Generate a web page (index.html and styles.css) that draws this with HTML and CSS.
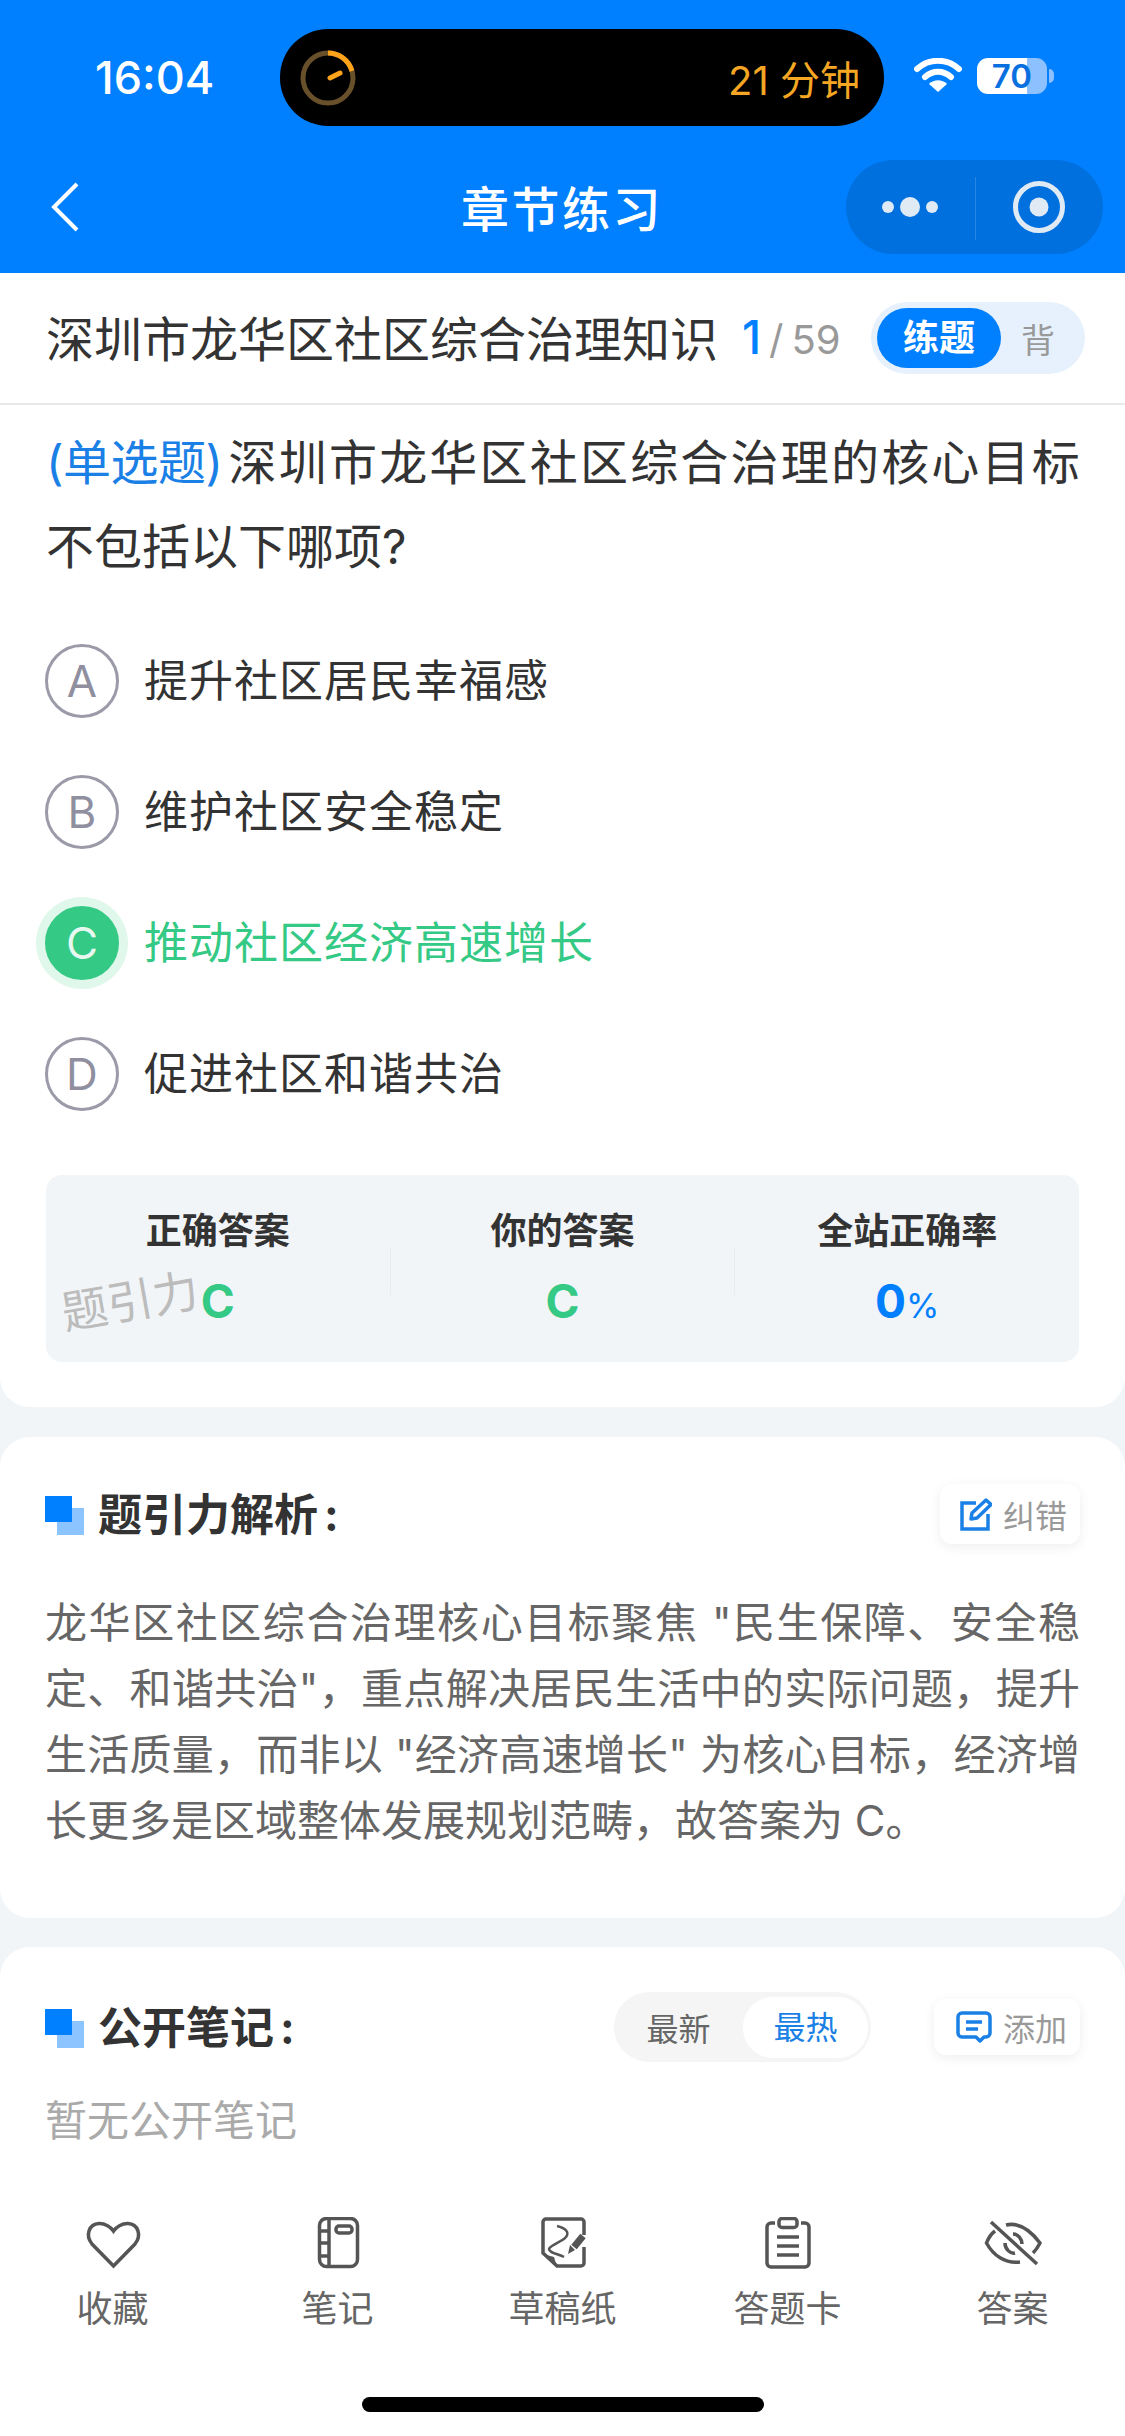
FILE: index.html
```html
<!DOCTYPE html>
<html lang="zh-CN">
<head>
  <meta charset="UTF-8">
  <meta name="viewport" content="width=device-width, initial-scale=1.0">
  <title>章节练习</title>
  <link rel="stylesheet" href="styles.css">
</head>
<body>
  <header class="top">
    <div class="status">
      <span class="time">16:04</span>
      <div class="island">
        <svg class="ring" viewBox="0 0 56 56">
          <circle cx="28" cy="28" r="25" fill="none" stroke="#68502a" stroke-width="5"/>
          <path d="M28 3A25 25 0 0 1 52 21" fill="none" stroke="#ffa31a" stroke-width="5"/>
          <path d="M30 28L40 23" fill="none" stroke="#ffa31a" stroke-width="5" stroke-linecap="round"/>
        </svg>
        <span class="timer">21 分钟</span>
      </div>
      <svg class="wifi" viewBox="0 0 48 36">
        <path d="M3 11C15 0 33 0 45 11" fill="none" stroke="#fff" stroke-width="6" stroke-linecap="round"/>
        <path d="M11 19C19 12 29 12 37 19" fill="none" stroke="#fff" stroke-width="6" stroke-linecap="round"/>
        <path d="M24 34L15 26C20 21 28 21 33 26Z" fill="#fff"/>
      </svg>
      <span class="battery">70</span>
      <span class="battery-tip"></span>
    </div>
    <div class="nav">
      <svg class="back" viewBox="0 0 28 50">
        <path d="M26 2L3 25L26 48" fill="none" stroke="#fff" stroke-width="4"/>
      </svg>
      <span class="nav-title">章节练习</span>
      <div class="capsule">
        <div class="cap-btn">
          <svg width="62" height="24" viewBox="0 0 62 24">
            <circle cx="9" cy="12" r="6" fill="#e0eaf5"/>
            <circle cx="31" cy="12" r="10" fill="#e0eaf5"/>
            <circle cx="53" cy="12" r="6" fill="#e0eaf5"/>
          </svg>
        </div>
        <div class="cap-btn cap-right">
          <svg width="54" height="54" viewBox="0 0 54 54">
            <circle cx="27" cy="27" r="23.5" fill="none" stroke="#e0eaf5" stroke-width="5"/>
            <circle cx="27" cy="27" r="9.5" fill="#e0eaf5"/>
          </svg>
        </div>
      </div>
    </div>
  </header>

  <section class="card card-question">
    <div class="sub-head">
      <span class="chapter">深圳市龙华区社区综合治理知识</span>
      <span class="count"><b>1</b><i>/</i>59</span>
      <div class="mode">
        <span class="mode-on">练题</span>
        <span class="mode-off">背</span>
      </div>
    </div>
    <p class="question"><span class="q-first"><span class="tag">(单选题)</span>深圳市龙华区社区综合治理的核心目标</span>不包括以下哪项?</p>

    <div class="options">
      <div class="option"><span class="letter">A</span><span class="opt-text">提升社区居民幸福感</span></div>
      <div class="option"><span class="letter">B</span><span class="opt-text">维护社区安全稳定</span></div>
      <div class="option picked"><span class="letter">C</span><span class="opt-text">推动社区经济高速增长</span></div>
      <div class="option"><span class="letter">D</span><span class="opt-text">促进社区和谐共治</span></div>
    </div>

    <div class="answer-box">
      <div class="stat">
        <div class="stat-label">正确答案</div>
        <div class="stat-value green">C</div>
      </div>
      <span class="stat-sep"></span>
      <div class="stat">
        <div class="stat-label">你的答案</div>
        <div class="stat-value green">C</div>
      </div>
      <span class="stat-sep"></span>
      <div class="stat">
        <div class="stat-label">全站正确率</div>
        <div class="stat-value blue">0<small>%</small></div>
      </div>
      <span class="watermark">题引力</span>
    </div>
  </section>

  <section class="card card-analysis">
    <div class="card-head">
      <span class="squares"></span>
      <h2>题引力解析<em>:</em></h2>
      <div class="chip">
        <svg width="32" height="33" viewBox="0 0 32 33">
          <path d="M16 5H2V31H28V16" fill="none" stroke="#1a80e6" stroke-width="3.5"/>
          <path d="M11 21L12 15L26 2L31 6.500L17 20Z" fill="none" stroke="#1a80e6" stroke-width="3.500" stroke-linejoin="round"/>
        </svg>
        纠错
      </div>
    </div>
    <div class="analysis">
      <p>龙华区社区综合治理核心目标聚焦 "民生保障、安全稳</p>
      <p>定、和谐共治"，重点解决居民生活中的实际问题，提升</p>
      <p>生活质量，而非以 "经济高速增长" 为核心目标，经济增</p>
      <p>长更多是区域整体发展规划范畴，故答案为 C。</p>
    </div>
  </section>

  <section class="card card-notes">
    <div class="card-head">
      <span class="squares"></span>
      <h2>公开笔记<em>:</em></h2>
      <div class="sort">
        <span class="sort-item">最新</span>
        <span class="sort-item sort-on">最热</span>
      </div>
      <div class="chip chip-add">
        <svg width="36" height="32" viewBox="0 0 36 32">
          <path d="M20 26H6A4 4 0 0 1 2 22V6A4 4 0 0 1 6 2H30A4 4 0 0 1 34 6V22A4 4 0 0 1 30 26H28L24 30Z" fill="none" stroke="#1a80e6" stroke-width="3.500" stroke-linejoin="round"/>
          <path d="M10 11H26M10 18H22" fill="none" stroke="#1a80e6" stroke-width="3.500"/>
        </svg>
        添加
      </div>
    </div>
    <p class="empty">暂无公开笔记</p>
  </section>

  <footer class="tabs">
    <div class="tab">
      <svg viewBox="0 0 60 54">
        <path d="M30.500 49L9 27C2 18 6 7 16 6.500C22 6.300 28 10 30.500 14C33 10 39 6.300 45 6.500C55 7 59 18 52 27Z"/>
      </svg>
      <span>收藏</span>
    </div>
    <div class="tab">
      <svg viewBox="0 0 60 54">
        <rect x="11.500" y="1.500" width="38" height="48" rx="7"/>
        <path d="M21 2V49M12 14H21M12 26H21M12 39H21"/>
        <rect x="28" y="9" width="16" height="7" rx="3"/>
      </svg>
      <span>笔记</span>
    </div>
    <div class="tab">
      <svg viewBox="0 0 60 54">
        <path d="M51 18V5A3 3 0 0 0 48 2H13A3 3 0 0 0 10 5V36L24 49H48A3 3 0 0 0 51 46V30"/>
        <path class="solid" d="M10 37L24 50L21 40Z"/>
        <path class="thin" d="M24 9C32 11 37 15 33 20C29 25 17 28 16 32C16 36 26 37 31 40"/>
        <path class="thick" d="M50 19L41 30"/>
        <path class="solid" d="M37 28L42 33L35 37Z"/>
      </svg>
      <span>草稿纸</span>
    </div>
    <div class="tab">
      <svg viewBox="0 0 60 54">
        <path d="M17 6H13A4 4 0 0 0 9 10V46A4 4 0 0 0 13 50H47A4 4 0 0 0 51 46V10A4 4 0 0 0 47 6H43"/>
        <rect x="21" y="1.500" width="18" height="9" rx="3"/>
        <path d="M19 20H41M19 29H41M19 38H41"/>
      </svg>
      <span>答题卡</span>
    </div>
    <div class="tab">
      <svg viewBox="0 0 60 54">
        <path d="M8 5L54 47"/>
        <path d="M23 8C36 5 48 14 57 26C55 30 53 33 50 36"/>
        <path d="M12 14C8 17 5 22 3.500 26C10 38 22 47 37 45"/>
        <path d="M22 26C22 32 27 37 32 36M30 17C35 17 39 22 39 27"/>
      </svg>
      <span>答案</span>
    </div>
  </footer>

  <div class="home-wrap"><span class="home-bar"></span></div>
</body>
</html>
```

FILE: styles.css
```css
:root {
  --blue: #0080ff;
  --link: #1a80e6;
  --green: #34c984;
  --page: #f2f5f8;
  --cjk: Inter, "Noto Sans CJK SC", sans-serif;
}

html, body {
  margin: 0;
  padding: 0;
}

body {
  width: 1125px;
  height: 2436px;
  overflow: hidden;
  background: var(--page);
  font-family: var(--cjk);
  color: #333;
}

p, h2 {
  margin: 0;
}

/* top blue bar */
.top {
  height: 273px;
  background: var(--blue);
}

.status {
  display: flex;
  align-items: center;
  height: 97px;
  padding: 29px 0 34px 95px;
}

.time {
  width: 185px;
  font-size: 45px;
  font-weight: 500;
  color: #fff;
}

.island {
  display: flex;
  align-items: center;
  justify-content: space-between;
  width: 604px;
  height: 97px;
  padding: 0 24px 0 20px;
  box-sizing: border-box;
  background: #000;
  border-radius: 48px;
}

.ring {
  width: 56px;
  height: 56px;
}

.timer {
  font-size: 40px;
  color: #f5a623;
}

.wifi {
  width: 48px;
  height: 36px;
  margin: -4px 15px 0 30px;
}

.battery {
  width: 70px;
  height: 36px;
  margin-top: -4px;
  border-radius: 11px;
  background: linear-gradient(90deg, #fff 0 50px, #8cc0ff 50px);
  font-size: 33px;
  font-weight: 600;
  line-height: 36px;
  text-align: center;
  color: #0a70e0;
}

.battery-tip {
  width: 5px;
  height: 14px;
  margin: -4px 0 0 2px;
  border-radius: 0 5px 5px 0;
  background: #8cc0ff;
}

.nav {
  display: flex;
  align-items: center;
  height: 94px;
  padding: 0 22px 0 51px;
}

.back {
  width: 28px;
  height: 50px;
}

.nav-title {
  margin-left: 382px;
  padding-bottom: 3px;
  font-size: 48px;
  font-weight: 500;
  letter-spacing: 2.500px;
  color: #fff;
}

.capsule {
  display: flex;
  margin-left: auto;
  width: 257px;
  height: 94px;
  border-radius: 47px;
  background: #0070de;
}

.cap-btn {
  display: flex;
  align-items: center;
  justify-content: center;
  flex: 1;
}

.cap-right {
  position: relative;
}

.cap-right::before {
  content: "";
  position: absolute;
  left: 0;
  top: 17px;
  bottom: 14px;
  width: 1px;
  background: #2a86e6;
}

/* cards */
.card {
  background: #fff;
  border-radius: 30px;
}

.card-question {
  border-radius: 0 0 30px 30px;
  padding-bottom: 45px;
}

.sub-head {
  display: flex;
  align-items: center;
  height: 130px;
  padding: 0 40px 0 46px;
  border-bottom: 2px solid #e8e9ea;
}

.chapter {
  padding-bottom: 4px;
  font-size: 48px;
  color: #333;
  white-space: nowrap;
}

.count {
  margin-left: 24px;
  padding-bottom: 3px;
  font-size: 40px;
  color: #999;
  white-space: nowrap;
}

.count b {
  font-size: 46px;
  font-weight: 500;
  color: var(--blue);
}

.count i {
  margin: 0 8px;
  font-style: normal;
}

.mode {
  display: flex;
  align-items: center;
  margin-left: auto;
  width: 214px;
  height: 72px;
  padding-left: 6px;
  box-sizing: border-box;
  border-radius: 36px;
  background: #e6f1fd;
}

.mode-on {
  width: 124px;
  height: 60px;
  border-radius: 30px;
  background: var(--blue);
  font-size: 36px;
  font-weight: 700;
  line-height: 60px;
  text-align: center;
  color: #fff;
}

.mode-off {
  margin-left: 20px;
  font-size: 34px;
  color: #999;
}

.question {
  padding: 16px 44px 0 46px;
  font-size: 48px;
  line-height: 84px;
  white-space: nowrap;
}

.q-first {
  display: block;
  letter-spacing: 2.200px;
}

.tag {
  margin-right: 6px;
  color: var(--link);
  letter-spacing: -0.500px;
}

.options {
  margin-top: 26px;
}

.option {
  display: flex;
  align-items: center;
  height: 131px;
  padding-left: 45px;
  font-size: 44px;
  letter-spacing: 1px;
  color: #333;
}

.opt-text {
  padding-bottom: 6px;
}

.letter {
  display: flex;
  align-items: center;
  justify-content: center;
  width: 74px;
  height: 74px;
  margin-right: 25px;
  box-sizing: border-box;
  border: 3px solid #9a9aa8;
  border-radius: 50%;
  font-size: 44px;
  letter-spacing: 0;
  color: #8f8fa0;
}

.picked {
  color: var(--green);
}

.picked .letter {
  border-color: var(--green);
  background: var(--green);
  box-shadow: 0 0 0 9px #e0f7ec;
  color: #e6f8ef;
}

.answer-box {
  position: relative;
  display: flex;
  height: 187px;
  margin: 36px 46px 0;
  border-radius: 16px;
  background: var(--page);
}

.stat {
  flex: 1;
  padding-top: 31px;
  text-align: center;
}

.stat-label {
  font-size: 36px;
  font-weight: 700;
  line-height: 50px;
  color: #333;
}

.stat-value {
  margin-top: 15px;
  font-size: 46px;
  font-weight: 700;
  line-height: 60px;
}

.stat-value small {
  font-size: 34px;
  font-weight: 400;
}

.green {
  color: var(--green);
}

.blue {
  color: var(--blue);
}

.stat-sep {
  width: 1px;
  height: 48px;
  margin-top: 72px;
  background: #e8ebef;
}

.watermark {
  position: absolute;
  left: 15px;
  top: 96px;
  font-size: 46px;
  line-height: 60px;
  color: #bcbcbc;
  transform: rotate(-10deg);
}

.card-analysis {
  margin-top: 30px;
  padding: 47px 45px 64px 45px;
}

.card-notes {
  margin-top: 29px;
  padding: 45px 45px 35px 45px;
  border-radius: 30px 30px 0 0;
}

.card-head {
  display: flex;
  align-items: center;
}

.card-analysis .card-head {
  height: 60px;
}

.card-notes .card-head {
  height: 70px;
}

.squares {
  position: relative;
  width: 39px;
  height: 39px;
  margin: 2px 14px 0 0;
  background: #8cc4ff;
  background-clip: content-box;
  padding: 12px 0 0 12px;
  box-sizing: border-box;
}

.squares::before {
  content: "";
  position: absolute;
  left: 0;
  top: 0;
  width: 27px;
  height: 26px;
  background: var(--blue);
}

.card-head h2 {
  padding-bottom: 4px;
  font-size: 44px;
  font-weight: 700;
  color: #333;
}

.card-head em {
  margin-left: 6px;
  font-style: normal;
}

.chip {
  display: flex;
  align-items: center;
  gap: 11px;
  height: 60px;
  margin-left: auto;
  padding: 0 13px 0 20px;
  border-radius: 12px;
  background: #fff;
  box-shadow: 0 3px 12px rgba(0, 0, 0, 0.07);
  font-size: 32px;
  color: #999;
}

.chip-add {
  height: 56px;
  margin-left: 63px;
  padding: 0 13px 0 22px;
}

.analysis {
  margin-top: 46px;
  font-size: 42px;
  line-height: 66px;
  color: #666;
}

.analysis p {
  text-align: justify;
  text-align-last: justify;
}

.analysis p:last-child {
  text-align-last: left;
}

.sort {
  display: flex;
  align-items: center;
  width: 257px;
  height: 70px;
  margin-left: auto;
  box-sizing: border-box;
  border-radius: 35px;
  background: #f5f5f5;
  font-size: 32px;
}

.sort-item {
  width: 129px;
  text-align: center;
  color: #666;
}

.sort-on {
  width: 125px;
  height: 61px;
  border-radius: 30px;
  background: #fff;
  line-height: 61px;
  color: var(--link);
}

.empty {
  margin-top: 29px;
  font-size: 42px;
  line-height: 60px;
  color: #aaa;
}

/* bottom bar */
.tabs {
  display: flex;
  padding-top: 31px;
  background: #fff;
}

.tab {
  display: flex;
  flex-direction: column;
  align-items: center;
  width: 225px;
  font-size: 36px;
  line-height: 50px;
  color: #666;
}

.tab svg {
  width: 60px;
  height: 54px;
  margin-bottom: 13px;
  fill: none;
  stroke: #555;
  stroke-width: 3.500;
}

.tab .solid {
  fill: #555;
  stroke: none;
}

.tab .thin {
  stroke-width: 2.500px;
}

.tab .thick {
  stroke-width: 7px;
}

.home-wrap {
  height: 102px;
  padding-top: 62px;
  box-sizing: border-box;
  background: #fff;
  text-align: center;
}

.home-bar {
  display: inline-block;
  width: 402px;
  height: 15px;
  border-radius: 8px;
  background: #000;
}
```
